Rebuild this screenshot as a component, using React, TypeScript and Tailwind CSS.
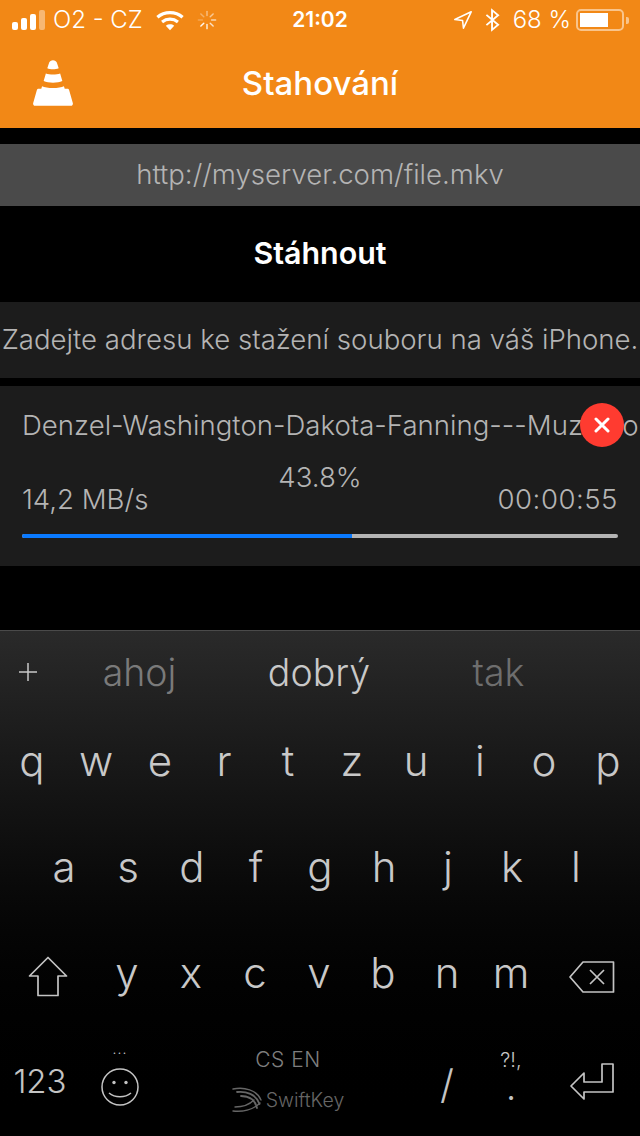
import React from 'react';

const sans = "font-['Inter','Noto_Sans',sans-serif]";

const rowOne = ['q', 'w', 'e', 'r', 't', 'z', 'u', 'i', 'o', 'p'];
const rowTwo = ['a', 's', 'd', 'f', 'g', 'h', 'j', 'k', 'l'];
const rowThree = ['y', 'x', 'c', 'v', 'b', 'n', 'm'];

function SignalBars() {
  return (
    <div className="flex items-end gap-[3px] w-[33px] h-[20px]">
      <div className="w-[6px] h-[8px] rounded-[2px] bg-white" />
      <div className="w-[6px] h-[12px] rounded-[2px] bg-white" />
      <div className="w-[6px] h-[16px] rounded-[2px] bg-white" />
      <div className="w-[6px] h-[20px] rounded-[2px] bg-white/40" />
    </div>
  );
}

function WifiIcon() {
  return (
    <svg width="28" height="21" viewBox="0 0 30 22" fill="none" stroke="white" strokeWidth="3.4">
      <path d="M1.500 7.500C9 .8 21 .8 28.500 7.500" />
      <path d="M6.500 12.500c5-4 12-4 17 0" />
      <path d="M10.500 16.500c2.700-2 6.300-2 9 0L15 21.500z" fill="white" stroke="none" />
    </svg>
  );
}

function Spinner() {
  const spokes = [0, 45, 90, 135, 180, 225, 270, 315];
  return (
    <svg width="20" height="20" viewBox="-11 -11 22 22" stroke="white" strokeWidth="1.600" strokeLinecap="round">
      {spokes.map((deg, i) => (
        <line
          key={deg}
          x1="0"
          y1="-5"
          x2="0"
          y2="-9.500"
          transform={`rotate(${deg})`}
          opacity={0.25 + ((i + 2) % 8) * 0.1}
        />
      ))}
    </svg>
  );
}

function LocationArrow() {
  return (
    <svg width="20" height="20" viewBox="0 0 22 22" fill="none" stroke="white" strokeWidth="1.700" strokeLinejoin="round">
      <path d="M20 2 2 10.500l8.500 1 1 8.500z" />
    </svg>
  );
}

function BluetoothIcon() {
  return (
    <svg width="15" height="24" viewBox="0 0 16 24" fill="none" stroke="white" strokeWidth="2">
      <path d="M1.500 6.500 14 17l-6.500 5.500V1.500L14 7 1.500 17.500" />
    </svg>
  );
}

function Battery() {
  return (
    <div className="flex items-center gap-[2px]">
      <div className="w-[48px] h-[22px] rounded-[5px] border-2 border-white/50 p-[2px]">
        <div className="w-[28px] h-full bg-white" />
      </div>
      <div className="w-[3px] h-[7px] rounded-r-[2px] bg-white/50" />
    </div>
  );
}

function VlcCone() {
  return (
    <svg width="40" height="46" viewBox="0 0 42 48" fill="white">
      <path d="M17 2.500C17.500 1 19 0 21 0s3.500 1 4 2.500l2 6c-3.500 1.500-9 1.500-12 0z" />
      <path d="M13.500 14c4 1.600 11 1.600 15 0l2.300 8c-5 2.400-14.600 2.400-19.600 0z" />
      <path d="M9.500 27.500C14 30 28 30 32.500 27.500l.8 2.500H36c1 0 1.600.5 2 1.500l3.800 13.500c.4 1.500-.5 3-2 3H2.200c-1.500 0-2.400-1.500-2-3L4 31.500c.4-1 1-1.500 2-1.500h2.700z" />
    </svg>
  );
}

function ShiftIcon() {
  return (
    <svg width="40" height="42" viewBox="0 0 40 42" fill="none" stroke="#c4c4c4" strokeWidth="1.700" strokeLinejoin="round">
      <path d="M20 1.500 1.500 20h8.500v19.500h20V20h8.500z" />
    </svg>
  );
}

function BackspaceIcon() {
  return (
    <svg width="46" height="32" viewBox="0 0 46 32" fill="none" stroke="#c4c4c4" strokeWidth="1.700" strokeLinejoin="round">
      <path d="M14 1h30.500v30H14L1 16z" />
      <path d="m21 9 14 14M35 9 21 23" />
    </svg>
  );
}

function SmileyIcon() {
  return (
    <svg width="38" height="38" viewBox="0 0 38 38" fill="none" stroke="#c4c4c4" strokeWidth="1.500">
      <circle cx="19" cy="19" r="18" />
      <circle cx="13" cy="14.500" r="1.700" fill="#c4c4c4" stroke="none" />
      <circle cx="25" cy="14.500" r="1.700" fill="#c4c4c4" stroke="none" />
      <path d="M8 25c6 5 16 5 22 0" />
    </svg>
  );
}

function ReturnIcon() {
  return (
    <svg width="44" height="38" viewBox="0 0 44 38" fill="none" stroke="#c4c4c4" strokeWidth="1.700" strokeLinejoin="round">
      <path d="M14 10 1 23l13 13v-7h29V1H32v18H14z" />
    </svg>
  );
}

// Swoosh of the keyboard brand: streaks fanning out to the left from the lower right
function SwiftKeyMark() {
  return (
    <svg width="30" height="26" viewBox="0 0 30 26" fill="none" stroke="#666666" strokeLinecap="round">
      <path d="M1 2c11-2.500 24 1 28 11" strokeWidth="1.400" />
      <path d="M5 5c9-1 19 2 22.500 12" strokeWidth="1.800" />
      <path d="M9 9c7 0 14 3 16 12" strokeWidth="1.800" />
      <path d="M1 24c9 1 20-1 27-8" strokeWidth="1.400" />
      <path d="M3 20c7 0 14-2 19-7" strokeWidth="1.400" />
    </svg>
  );
}

function Key({ label }: { label: string }) {
  return (
    <div className="w-16 h-full flex items-center justify-center text-[42px] font-light text-[#c8c8c8]">
      {label}
    </div>
  );
}

export default function App() {
  return (
    <div className={`w-[640px] h-[1136px] overflow-hidden bg-black flex flex-col ${sans}`}>
      {/* Status bar and title */}
      <div className="h-[128px] bg-[#f28816] text-white">
        <div className="h-10 pl-[12px] pr-[11px] flex items-center justify-between relative text-[24px] font-light">
          <div className="flex items-center">
            <SignalBars />
            <span className="ml-[8px]">O2 - CZ</span>
            <span className="ml-[13px] flex"><WifiIcon /></span>
            <span className="ml-[13px] flex"><Spinner /></span>
          </div>
          <span className="absolute left-0 right-0 text-center font-semibold text-[21px]">21:02</span>
          <div className="flex items-center">
            <LocationArrow />
            <span className="ml-[12px] flex"><BluetoothIcon /></span>
            <span className="ml-[13px]">68 %</span>
            <span className="ml-[5px] flex"><Battery /></span>
          </div>
        </div>
        <div className="h-[88px] relative flex items-center justify-center">
          <div className="absolute left-[33px] top-[20px]"><VlcCone /></div>
          <span className="text-[33px] font-medium pb-[1px]">Stahování</span>
        </div>
      </div>

      {/* URL field */}
      <div className="mt-4 h-[62px] bg-[#4a4a4a] flex items-center justify-center text-[27.6px] font-light text-[#b4b4b4]">
        http://myserver.com/file.mkv
      </div>

      <div className="h-[96px] flex items-center justify-center text-[30.4px] font-semibold text-white">
        Stáhnout
      </div>

      <div className="h-[76px] bg-[#1c1c1c] flex items-center justify-center text-[27.6px] font-light text-[#b4b4b4] whitespace-nowrap">
        Zadejte adresu ke stažení souboru na váš iPhone.
      </div>

      {/* Active download */}
      <div className="mt-2 h-[180px] bg-[#1c1c1c] relative px-[22px] text-[#b4b4b4] font-light">
        <div className="pt-[22px] text-[27.6px] whitespace-nowrap overflow-hidden -mr-[22px] leading-[34px]">
          Denzel-Washington-Dakota-Fanning---Muz-v-ohni
        </div>
        <div className="absolute right-[16px] top-[17px] w-[44px] h-[44px] rounded-full bg-[#ff3b30] flex items-center justify-center">
          <svg width="16" height="16" viewBox="0 0 16 16" stroke="white" strokeWidth="3" strokeLinecap="round">
            <path d="m2 2 12 12M14 2 2 14" />
          </svg>
        </div>
        <div className="mt-[18px] h-[60px] relative flex items-end justify-between text-[27.6px] leading-[34px]">
          <span className="pb-[4px]">14,2 MB/s</span>
          <span className="absolute left-0 right-0 top-0 text-center">43.8%</span>
          <span className="pb-[4px] tracking-[0.5px]">00:00:55</span>
        </div>
        <div className="mt-[14px] h-1 rounded-full bg-[#b4b4b4] overflow-hidden">
          <div className="h-full w-[330px] bg-[#0a7aff]" />
        </div>
      </div>

      {/* Keyboard */}
      <div className="mt-[64px] flex-1 bg-gradient-to-b from-[#2a2a2a] to-[#000000] border-t border-[#4a4a4a] flex flex-col">
        <div className="h-[76px] pt-[8px] pl-[50px] relative flex items-center text-[37.500px] font-light">
          <svg className="absolute left-[17px] top-[30px]" width="22" height="22" viewBox="0 0 22 22" stroke="#c8c8c8" strokeWidth="1.500">
            <path d="M11 2v18M2 11h18" />
          </svg>
          <span className="w-[179px] text-center text-[#7a7a7a]">ahoj</span>
          <span className="w-[180px] text-center text-[#c8c8c8]">dobrý</span>
          <span className="w-[179px] text-center text-[#6e6e6e]">tak</span>
        </div>
        <div className="h-[106px] flex">
          {rowOne.map((k) => <Key key={k} label={k} />)}
        </div>
        <div className="h-[106px] flex pl-8">
          {rowTwo.map((k) => <Key key={k} label={k} />)}
        </div>
        <div className="h-[106px] flex">
          <div className="w-[95px] pt-[10px] flex items-center justify-center"><ShiftIcon /></div>
          {rowThree.map((k) => <Key key={k} label={k} />)}
          <div className="w-[97px] pt-[10px] flex items-center justify-center"><BackspaceIcon /></div>
        </div>
        <div className="flex-1 pt-[3px] flex items-center text-[#c4c4c4] font-light">
          <div className="w-[80px] text-center text-[33px]">123</div>
          <div className="w-[80px] mb-[16px] flex flex-col items-center">
            <span className="h-[14px] text-[14px] leading-[14px] tracking-[1px] mb-[12px]">...</span>
            <SmileyIcon />
          </div>
          <div className="w-[256px] mb-[5px] flex flex-col items-center">
            <span className="text-[21px] leading-[28px] text-[#7e7e7e] tracking-[0.5px]">CS EN</span>
            <div className="flex items-center gap-[4px] mt-[13px]">
              <SwiftKeyMark />
              <span className="text-[19.500px] leading-[26px] text-[#666666]">SwiftKey</span>
            </div>
          </div>
          <div className="w-[32px] ml-[15px] pt-[6px] text-center text-[40px]">/</div>
          <div className="w-[64px] ml-[16px] mb-[14px] flex flex-col items-center">
            <span className="text-[20px] leading-[20px]">?!,</span>
            <span className="text-[30px] font-normal leading-[24px] mt-[7px]">.</span>
          </div>
          <div className="flex-1 flex justify-center"><ReturnIcon /></div>
        </div>
      </div>
    </div>
  );
}
